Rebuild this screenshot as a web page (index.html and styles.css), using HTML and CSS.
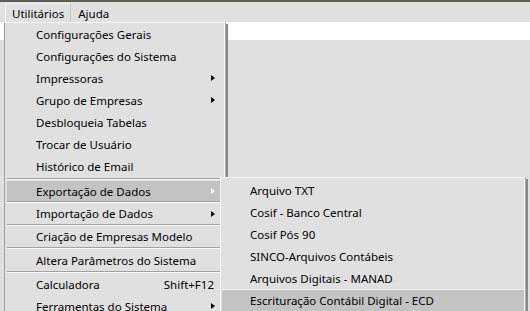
FILE: index.html
```html
<!DOCTYPE html>
<html lang="pt">
<head>
<meta charset="utf-8">
<title>Utilitários</title>
<link rel="stylesheet" href="styles.css">
</head>
<body>
<div class="topline"></div>
<nav class="menubar">
  <span class="mb-item active">Utilitários</span>
  <span class="mb-item">Ajuda</span>
</nav>
<div class="strip"></div>
<div class="workspace"></div>

<div class="menu main-menu">
  <div class="item">Configurações Gerais</div>
  <div class="item">Configurações do Sistema</div>
  <div class="item has-sub">Impressoras<i class="arrow"></i></div>
  <div class="item has-sub">Grupo de Empresas<i class="arrow"></i></div>
  <div class="item">Desbloqueia Tabelas</div>
  <div class="item">Trocar de Usuário</div>
  <div class="item">Histórico de Email</div>
  <div class="sep first"></div>
  <div class="item short has-sub hl">Exportação de Dados<i class="arrow"></i></div>
  <div class="sep"></div>
  <div class="item short has-sub">Importação de Dados<i class="arrow"></i></div>
  <div class="sep"></div>
  <div class="item short">Criação de Empresas Modelo</div>
  <div class="sep"></div>
  <div class="item">Altera Parâmetros do Sistema</div>
  <div class="sep"></div>
  <div class="item">Calculadora<span class="shortcut">Shift+F12</span></div>
  <div class="item has-sub">Ferramentas do Sistema<i class="arrow"></i></div>
</div>

<div class="menu sub-menu">
  <div class="item">Arquivo TXT</div>
  <div class="item">Cosif - Banco Central</div>
  <div class="item">Cosif Pós 90</div>
  <div class="item">SINCO-Arquivos Contábeis</div>
  <div class="item">Arquivos Digitais - MANAD</div>
  <div class="item hl">Escrituração Contábil Digital - ECD</div>
</div>
</body>
</html>
```
FILE: styles.css
```css
html, body {
  margin: 0;
  padding: 0;
}
body {
  width: 530px;
  height: 311px;
  overflow: hidden;
  position: relative;
  background: #e0e0e0;
  font-family: "Segoe UI", "Noto Sans", sans-serif;
  font-size: 11.5px;
  color: #000;
}
.topline {
  height: 2px;
  background: #5e5e57;
}
.menubar {
  height: 20px;
  display: flex;
  align-items: stretch;
  padding-left: 5px;
  background: #e0e0e0;
}
.mb-item {
  display: flex;
  align-items: center;
  padding: 0 6px;
  border: 1px solid transparent;
  border-bottom: 0;
  margin-top: 1px;
}
.mb-item.active {
  border-color: #f4f4f4;
  border-right-color: #c8c8c8;
}
.strip {
  height: 18px;
  background: #fff;
}
.workspace {
  height: 271px;
  background: #e0e0e0;
}
.menu {
  position: absolute;
  box-sizing: border-box;
  background: #e0e0e0;
  border: 1px solid;
  border-color: #f8f8f8 #f8f8f8 #9a9a9a #a0a0a0;
  box-shadow: 1px 0 0 #a8a8a8, 3px 2px 0 #888;
}
.main-menu {
  left: 4px;
  top: 22px;
  width: 221px;
  padding: 0 3px 0 2px;
}
.sub-menu {
  left: 220px;
  top: 177px;
  width: 305px;
  padding: 1px 0 0 1px;
  border-left-color: #f8f8f8;
}
.item {
  height: 22px;
  box-sizing: border-box;
  display: flex;
  align-items: center;
  padding: 0 6px 0 29px;
  white-space: nowrap;
}
.item.short {
  height: 21px;
}
.sub-menu .item {
  padding-left: 28px;
}
.item.hl {
  background: #c3c3c3;
}
.main-menu .item.hl {
  border-top: 1px solid #e0e0e0;
}
.sub-menu .item.hl {
  border-top: 1px solid #f4f4f4;
}
.arrow {
  margin-left: auto;
  width: 0;
  height: 0;
  border-left: 4px solid #000;
  border-top: 3.5px solid transparent;
  border-bottom: 3.5px solid transparent;
}
.item.hl .arrow {
  border-left-color: #fff;
}
.shortcut {
  margin-left: auto;
  padding-right: 1px;
}
.sep {
  height: 0;
  border-top: 1px solid #a0a0a0;
  border-bottom: 1px solid #fafafa;
}
.sep.first {
  margin-top: 1px;
}
```
